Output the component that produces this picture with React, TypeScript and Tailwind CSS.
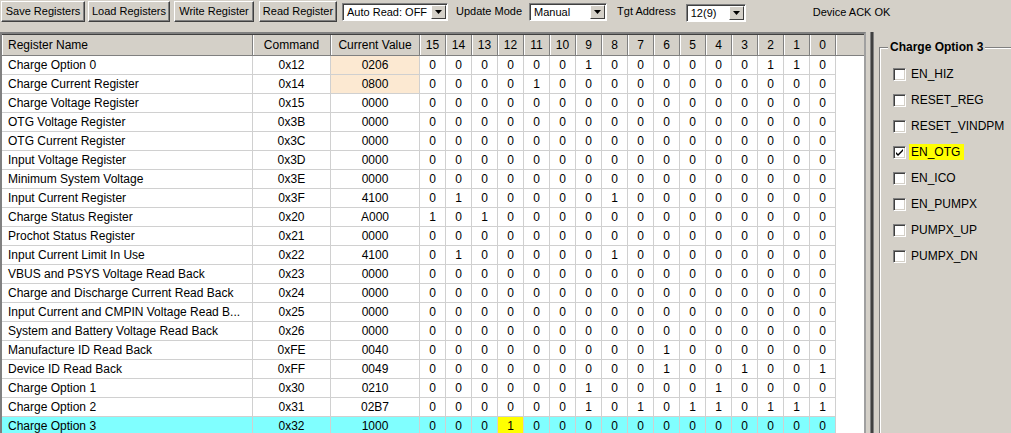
import React from 'react'

interface Reg {
  name: string
  cmd: string
  value: string
}

const REGS: Reg[] = [
  { name: 'Charge Option 0', cmd: '0x12', value: '0206' },
  { name: 'Charge Current Register', cmd: '0x14', value: '0800' },
  { name: 'Charge Voltage Register', cmd: '0x15', value: '0000' },
  { name: 'OTG Voltage Register', cmd: '0x3B', value: '0000' },
  { name: 'OTG Current Register', cmd: '0x3C', value: '0000' },
  { name: 'Input Voltage Register', cmd: '0x3D', value: '0000' },
  { name: 'Minimum System Voltage', cmd: '0x3E', value: '0000' },
  { name: 'Input Current Register', cmd: '0x3F', value: '4100' },
  { name: 'Charge Status Register', cmd: '0x20', value: 'A000' },
  { name: 'Prochot Status Register', cmd: '0x21', value: '0000' },
  { name: 'Input Current Limit In Use', cmd: '0x22', value: '4100' },
  { name: 'VBUS and PSYS Voltage Read Back', cmd: '0x23', value: '0000' },
  { name: 'Charge and Discharge Current Read Back', cmd: '0x24', value: '0000' },
  { name: 'Input Current and CMPIN Voltage Read B...', cmd: '0x25', value: '0000' },
  { name: 'System and Battery Voltage Read Back', cmd: '0x26', value: '0000' },
  { name: 'Manufacture ID Read Back', cmd: '0xFE', value: '0040' },
  { name: 'Device ID Read Back', cmd: '0xFF', value: '0049' },
  { name: 'Charge Option 1', cmd: '0x30', value: '0210' },
  { name: 'Charge Option 2', cmd: '0x31', value: '02B7' },
  { name: 'Charge Option 3', cmd: '0x32', value: '1000' },
]

const BITS = [15, 14, 13, 12, 11, 10, 9, 8, 7, 6, 5, 4, 3, 2, 1, 0]

const OPTIONS = ['EN_HIZ', 'RESET_REG', 'RESET_VINDPM', 'EN_OTG', 'EN_ICO', 'EN_PUMPX', 'PUMPX_UP', 'PUMPX_DN']

function ToolButton({ label, w }: { label: string; w: string }) {
  return (
    <div
      className={`${w} h-[21px] flex items-center justify-center bg-[#d4d0c8] border border-t-white border-l-white border-r-[#404040] border-b-[#404040] shadow-[inset_-1px_-1px_0_#808080] text-[11px] text-black`}
    >
      {label}
    </div>
  )
}

function Combo({ text, w }: { text: string; w: string }) {
  return (
    <div className={`${w} h-[18px] flex items-center bg-white border border-t-[#808080] border-l-[#808080] border-r-white border-b-white shadow-[inset_1px_1px_0_#404040]`}>
      <span className="flex-1 pl-[4px] text-[11px] leading-none text-black">{text}</span>
      <div className="w-[15px] h-[14px] mr-px flex items-center justify-center bg-[#d4d0c8] border border-t-white border-l-white border-r-[#404040] border-b-[#404040]">
        <svg width="7" height="4" viewBox="0 0 7 4">
          <path d="M0 0h7L3.5 4z" fill="#000" />
        </svg>
      </div>
    </div>
  )
}

function bitsOf(hex: string) {
  const v = parseInt(hex, 16)
  return BITS.map((b) => (v >> b) & 1)
}

export default function App() {
  return (
    <div className="w-[1011px] h-[433px] overflow-hidden bg-[#d4d0c8] font-['Liberation_Sans',Arial,sans-serif] text-black flex flex-col">
      {/* toolbar */}
      <div className="h-[32px] shrink-0 flex items-start pt-px pl-px">
        <ToolButton label="Save Registers" w="w-[84px]" />
        <div className="w-[3px]" />
        <ToolButton label="Load Registers" w="w-[82px]" />
        <div className="w-[4px]" />
        <ToolButton label="Write Register" w="w-[80px]" />
        <div className="w-[5px]" />
        <ToolButton label="Read Register" w="w-[78px]" />
        <div className="w-[5px]" />
        <div className="mt-[2px]"><Combo text="Auto Read: OFF" w="w-[106px]" /></div>
        <span className="ml-[8px] mt-[2px] text-[11px]">Update Mode</span>
        <div className="ml-[7px] mt-[2px]"><Combo text="Manual" w="w-[78px]" /></div>
        <span className="ml-[10px] mt-[2px] text-[11px]">Tgt Address</span>
        <div className="ml-[10px] mt-[3px]"><Combo text="12(9)" w="w-[60px]" /></div>
        <span className="ml-[67px] mt-[3px] text-[11px]">Device ACK OK</span>
      </div>

      <div className="flex-1 flex min-h-0">
        {/* register table */}
        <div className="w-[866px] bg-white border-t-2 border-l-2 border-r-2 border-t-[#808080] border-l-[#808080] border-r-[#a0a0a0] flex flex-col text-[12px]">
          <div className="h-[22px] shrink-0 flex bg-[#d4d0c8] border-b border-b-[#808080] border-t border-t-[#404040]">
            <div className="w-[251px] pl-[6px] flex items-center border-r border-r-[#808080] shadow-[inset_1px_0_0_white]">Register Name</div>
            <div className="w-[78px] flex items-center justify-center border-r border-r-[#808080] shadow-[inset_1px_0_0_white]">Command</div>
            <div className="w-[89px] flex items-center justify-center border-r border-r-[#808080] shadow-[inset_1px_0_0_white]">Current Value</div>
            {BITS.map((b) => (
              <div key={b} className="w-[26px] flex items-center justify-center border-r border-r-[#808080] shadow-[inset_1px_0_0_white]">
                {b}
              </div>
            ))}
            <div className="flex-1 shadow-[inset_1px_0_0_white]" />
          </div>
          {REGS.map((r, i) => {
            const last = i === REGS.length - 1
            const peach = i < 2
            return (
              <div key={r.cmd} className={`h-[19px] shrink-0 w-[834px] flex ${last ? 'bg-[#80ffff]' : ''}`}>
                <div className="w-[251px] pl-[6px] flex items-center border-r border-b border-[#d0d0d0] whitespace-nowrap overflow-hidden">{r.name}</div>
                <div className="w-[78px] flex items-center justify-center border-r border-b border-[#d0d0d0]">{r.cmd}</div>
                <div className={`w-[89px] flex items-center justify-center border-r border-b border-[#d0d0d0] ${peach ? 'bg-[#fce9d2]' : ''}`}>{r.value}</div>
                {bitsOf(r.value).map((v, j) => (
                  <div
                    key={j}
                    className={`w-[26px] flex items-center justify-center border-r border-b border-[#d0d0d0] ${last && BITS[j] === 12 ? 'bg-[#ffff00]' : ''}`}
                  >
                    {v}
                  </div>
                ))}
              </div>
            )
          })}
        </div>

        {/* splitter */}
        <div className="w-[4px]" />
        <div className="w-[4px] bg-[#404040] border-x border-[#808080]" />

        {/* option panel */}
        <div className="flex-1 pl-[5px] pt-[15px]">
          <div className="relative h-full border-t border-l border-[#808080] shadow-[inset_1px_1px_0_white]">
            <span className="absolute -top-[8px] left-[8px] px-[2px] bg-[#d4d0c8] text-[12px] font-bold leading-[14px]">Charge Option 3</span>
            <div className="pt-[13px] pl-[13px] flex flex-col">
              {OPTIONS.map((o) => (
                <div key={o} className="h-[26px] flex items-center">
                  <div className="w-[13px] h-[13px] bg-white border border-t-[#808080] border-l-[#808080] border-r-white border-b-white shadow-[inset_1px_1px_0_#404040,inset_-1px_-1px_0_#d4d0c8] flex items-center justify-center">
                    {o === 'EN_OTG' && (
                      <svg width="9" height="9" viewBox="0 0 9 9">
                        <path d="M1 4l2 2 5-5v2L3 8 1 6z" fill="#000" />
                      </svg>
                    )}
                  </div>
                  <span className={`ml-[3px] px-[2px] text-[12px] leading-[16px] ${o === 'EN_OTG' ? 'bg-[#ffff00] pr-[4px]' : ''}`}>{o}</span>
                </div>
              ))}
            </div>
          </div>
        </div>
      </div>
    </div>
  )
}
